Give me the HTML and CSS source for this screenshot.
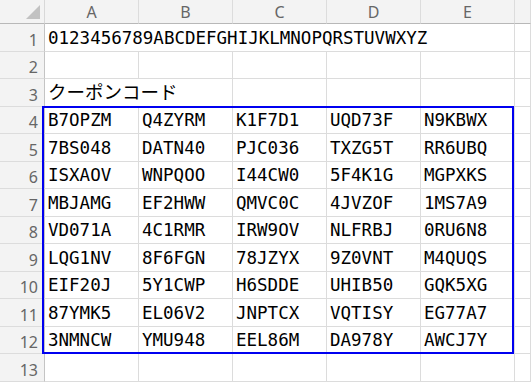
FILE: index.html
```html
<!DOCTYPE html>
<html lang="ja">
<head>
  <meta charset="UTF-8">
  <title>クーポンコード</title>
  <link rel="stylesheet" href="styles.css">
</head>
<body>
  <div class="wrap">
    <div class="sheet" id="sheet">
      <div class="corner"><span class="tri"></span></div>
      <div class="colhead">A</div>
      <div class="colhead">B</div>
      <div class="colhead">C</div>
      <div class="colhead">D</div>
      <div class="colhead">E</div>
      <div class="colhead"></div>
    </div>
    <div class="overlay">
      <div class="selection"></div>
    </div>
  </div>

  <script>
    const codes = [
      ['B7OPZM', 'Q4ZYRM', 'K1F7D1', 'UQD73F', 'N9KBWX'],
      ['7BS048', 'DATN40', 'PJC036', 'TXZG5T', 'RR6UBQ'],
      ['ISXAOV', 'WNPQOO', 'I44CW0', '5F4K1G', 'MGPXKS'],
      ['MBJAMG', 'EF2HWW', 'QMVC0C', '4JVZOF', '1MS7A9'],
      ['VD071A', '4C1RMR', 'IRW9OV', 'NLFRBJ', '0RU6N8'],
      ['LQG1NV', '8F6FGN', '78JZYX', '9Z0VNT', 'M4QUQS'],
      ['EIF20J', '5Y1CWP', 'H6SDDE', 'UHIB50', 'GQK5XG'],
      ['87YMK5', 'EL06V2', 'JNPTCX', 'VQTISY', 'EG77A7'],
      ['3NMNCW', 'YMU948', 'EEL86M', 'DA978Y', 'AWCJ7Y']
    ];

    const sheet = document.getElementById('sheet');

    function cell(text, cls, span) {
      const el = document.createElement('div');
      el.className = cls;
      el.textContent = text;
      if (span) el.style.gridColumn = 'span ' + span;
      sheet.appendChild(el);
    }

    function emptyRow() {
      for (let i = 0; i < 6; i++) cell('', 'cell');
    }

    cell('1', 'rowhead');
    cell('0123456789ABCDEFGHIJKLMNOPQRSTUVWXYZ', 'cell', 5);
    cell('', 'cell');

    cell('2', 'rowhead');
    emptyRow();

    cell('3', 'rowhead');
    cell('クーポンコード', 'cell jp', 2);
    for (let i = 0; i < 4; i++) cell('', 'cell');

    codes.forEach((row, i) => {
      cell(String(i + 4), 'rowhead');
      row.forEach(code => cell(code, 'cell'));
      cell('', 'cell');
    });

    cell('13', 'rowhead');
    emptyRow();
  </script>
</body>
</html>
```

FILE: styles.css
```css
body {
  margin: 0;
  background: #fff;
  overflow: hidden;
}
.wrap {
  display: grid;
  width: 531px;
  height: 384px;
  overflow: hidden;
}
.sheet, .overlay {
  grid-area: 1 / 1;
  display: grid;
  grid-template-columns: 45px repeat(5, 94px) 1fr;
  grid-template-rows: 24px;
  grid-auto-rows: 27.5px;
  align-content: start;
}
.overlay {
  pointer-events: none;
}
.corner, .colhead, .rowhead {
  background: #f3f3f3;
  color: #666;
  font-family: "Noto Sans", "Liberation Sans", sans-serif;
  font-size: 16px;
  box-sizing: border-box;
}
.corner {
  position: relative;
  border-right: 1px solid #d8d8d8;
  border-bottom: 1px solid #b8b8b8;
}
.tri {
  position: absolute;
  right: 4px;
  bottom: 4px;
  width: 0;
  height: 0;
  border-left: 14px solid transparent;
  border-bottom: 14px solid #c2c2c2;
}
.colhead {
  display: flex;
  align-items: center;
  justify-content: center;
  border-right: 1px solid #dcdcdc;
  border-bottom: 1px solid #b8b8b8;
  line-height: 1;
  padding-top: 1px;
}
.rowhead {
  display: flex;
  align-items: flex-end;
  justify-content: flex-end;
  padding: 0 6px 3px 0;
  border-right: 1px solid #c4c4c4;
  border-bottom: 1px solid #dcdcdc;
  line-height: 1;
}
.cell {
  display: flex;
  align-items: flex-end;
  padding: 0 0 2px 3px;
  box-sizing: border-box;
  border-right: 1px solid #dcdcdc;
  border-bottom: 1px solid #dcdcdc;
  font-family: "DejaVu Sans Mono", "Noto Sans CJK JP", monospace;
  font-size: 17.5px;
  line-height: 1.2;
  color: #000;
  white-space: nowrap;
}
.cell.jp {
  font-size: 18.5px;
  padding-bottom: 1px;
}
.selection {
  grid-column: 2 / 7;
  grid-row: 5 / 14;
  margin: -0.5px 1px 0 -3px;
  border: 2px solid #0000f0;
}
```
